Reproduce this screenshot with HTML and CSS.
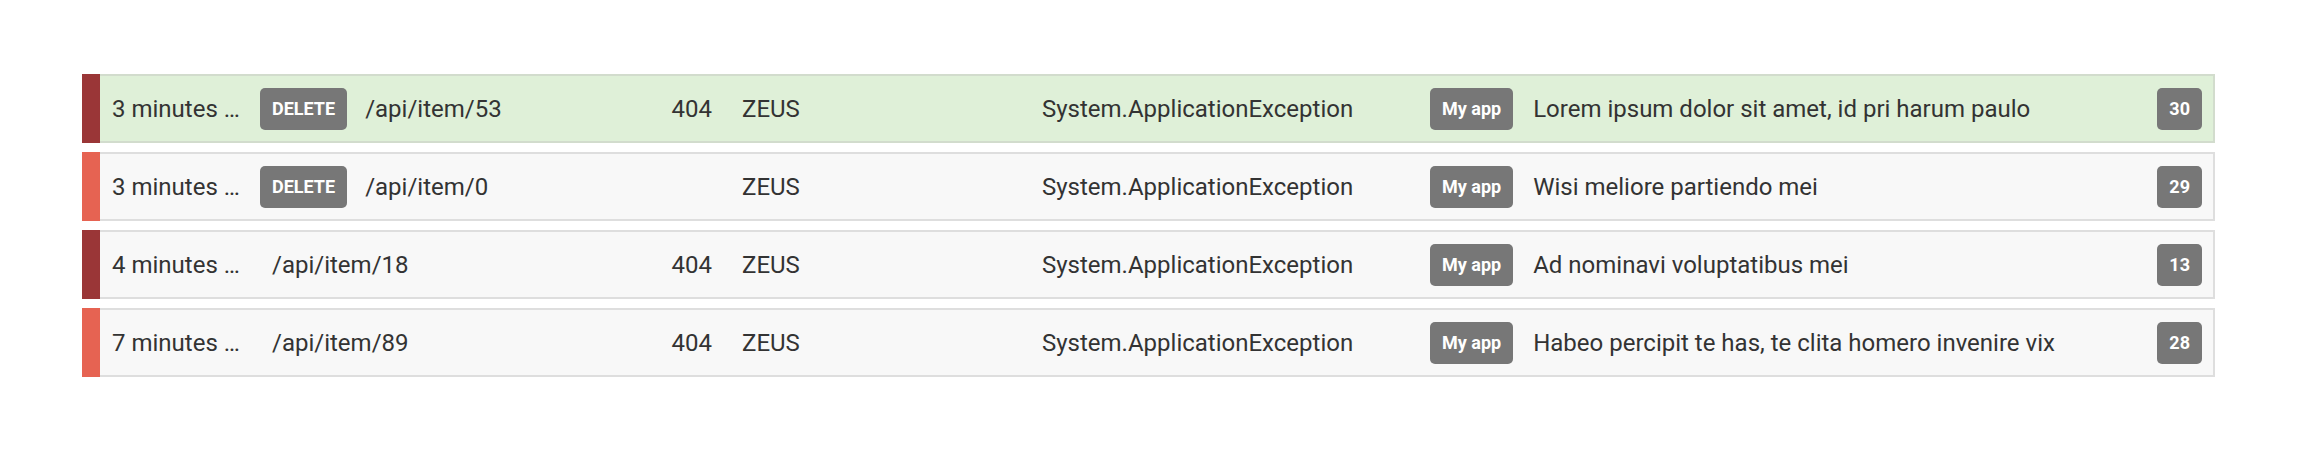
FILE: index.html
```html
<!DOCTYPE html>
<html>
<head>
  <meta charset="utf-8">
  <title>Error log</title>
  <link rel="stylesheet" href="styles.css">
</head>
<body>

  <section class="log-list">
    <div class="log-row success">
      <span class="bar bar-dark"></span>
      <span class="time" title="3 minutes ago">3 minutes …</span>
      <span class="path"><span class="label">DELETE</span>/api/item/53</span>
      <span class="status">404</span>
      <span class="host">ZEUS</span>
      <span class="type">System.ApplicationException</span>
      <span class="label">My app</span>
      <span class="message">Lorem ipsum dolor sit amet, id pri harum paulo</span>
      <span class="label count">30</span>
    </div>
    <div class="log-row">
      <span class="bar bar-light"></span>
      <span class="time" title="3 minutes ago">3 minutes …</span>
      <span class="path"><span class="label">DELETE</span>/api/item/0</span>
      <span class="status"></span>
      <span class="host">ZEUS</span>
      <span class="type">System.ApplicationException</span>
      <span class="label">My app</span>
      <span class="message">Wisi meliore partiendo mei</span>
      <span class="label count">29</span>
    </div>
    <div class="log-row">
      <span class="bar bar-dark"></span>
      <span class="time" title="4 minutes ago">4 minutes …</span>
      <span class="path no-method">/api/item/18</span>
      <span class="status">404</span>
      <span class="host">ZEUS</span>
      <span class="type">System.ApplicationException</span>
      <span class="label">My app</span>
      <span class="message">Ad nominavi voluptatibus mei</span>
      <span class="label count">13</span>
    </div>
    <div class="log-row">
      <span class="bar bar-light"></span>
      <span class="time" title="7 minutes ago">7 minutes …</span>
      <span class="path no-method">/api/item/89</span>
      <span class="status">404</span>
      <span class="host">ZEUS</span>
      <span class="type">System.ApplicationException</span>
      <span class="label">My app</span>
      <span class="message">Habeo percipit te has, te clita homero invenire vix</span>
      <span class="label count">28</span>
    </div>
  </section>

</body>
</html>
```

FILE: styles.css
```css
html {
  font-family: Roboto, "Liberation Sans", sans-serif;
}

* {
  box-sizing: border-box;
}

body {
  margin: 0;
  background: #fff;
  color: #333;
}

.log-list {
  width: 2133px;
  margin: 74px 0 0 82px;
  font-size: 24px;
}

.log-row {
  display: flex;
  align-items: center;
  height: 69px;
  margin-bottom: 9px;
  background-color: #f8f8f8;
  border: 2px solid #dedede;
  border-left: none;
  white-space: nowrap;
}

.log-row.success {
  background-color: #dff0d8;
  border-color: #d2dccd;
}

/* coloured strip on the left, drawn over the row borders */
.bar {
  align-self: stretch;
  width: 18px;
  margin: -2px 0;
  flex-shrink: 0;
}

.bar-dark {
  background-color: #9a3637;
}

.bar-light {
  background-color: #e66352;
}

.time {
  width: 136px;
  margin-left: 12px;
}

.path {
  display: flex;
  align-items: center;
  gap: 18px;
  width: 380px;
  margin-left: 12px;
}

.path.no-method {
  padding-left: 12px;
}

.status {
  width: 72px;
  text-align: right;
}

.host {
  width: 300px;
  margin-left: 30px;
}

.type {
  width: 388px;
}

.label {
  display: inline-flex;
  align-items: center;
  height: 42px;
  padding: 0 12px;
  border-radius: 5px;
  background-color: #777;
  color: #fff;
  font-size: 18px;
  font-weight: 700;
  flex-shrink: 0;
}

.message {
  flex: 1;
  margin-left: 20px;
}

.count {
  margin-right: 11px;
}
```
